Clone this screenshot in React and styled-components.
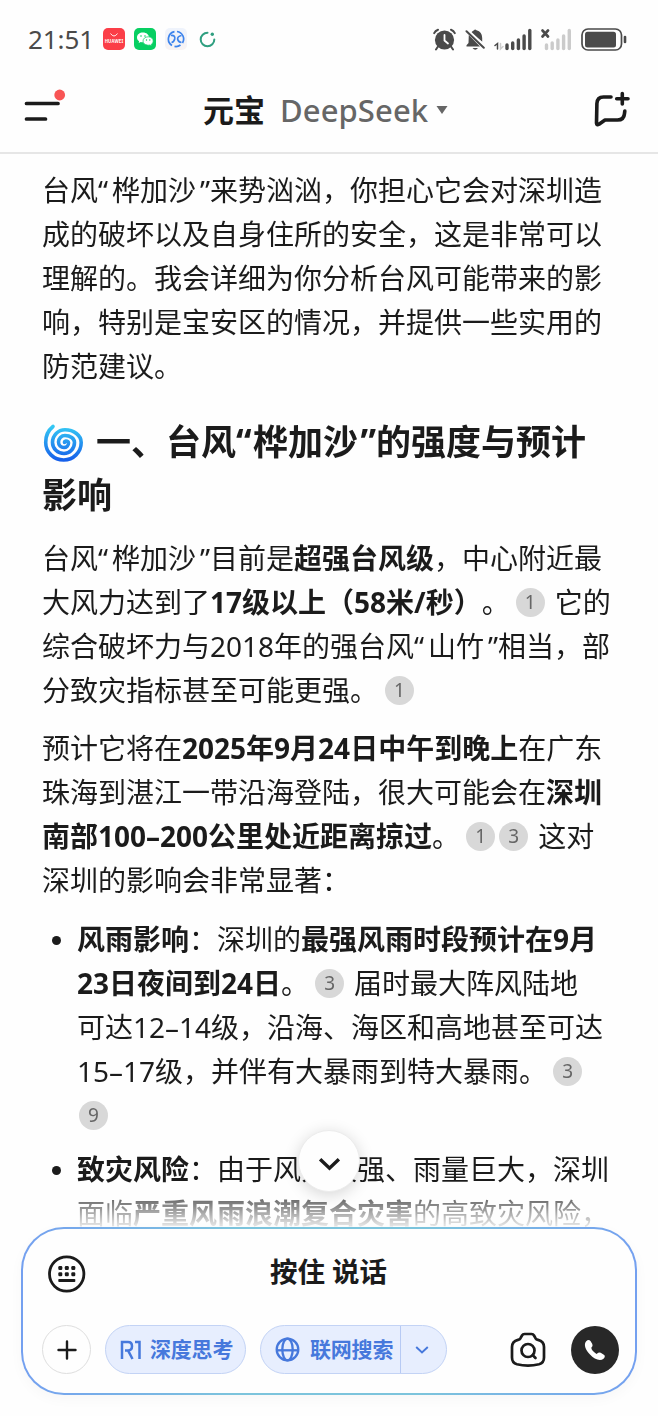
import React from 'react';
import styled, { createGlobalStyle } from 'styled-components';

const ink = '#1b1b1b';
const blue = '#4678dc';

const Global = createGlobalStyle`
  * { box-sizing: border-box; }
  body { margin: 0; background: #fefefe; }
  body, button { font-family: 'Noto Sans', 'Noto Sans CJK SC', sans-serif; color: ${ink}; }
  button { padding: 0; border: 0; background: none; }
  svg { display: block; flex: none; }
`;

const Screen = styled.div`
  width: 658px;
  height: 1416px;
  display: flex;
  flex-direction: column;
  overflow: hidden;
  background: #fefefe;
`;

const StatusBar = styled.div`
  height: 80px;
  padding: 0 31px 2px 28px;
  display: flex;
  align-items: center;
  justify-content: space-between;
`;

const StatusGroup = styled.div`
  display: flex;
  align-items: center;
  gap: ${(p) => p.$gap}px;
`;

const Clock = styled.span`
  font-size: 26px;
  line-height: 30px;
  letter-spacing: -0.1px;
  color: #4a4a4a;
  width: 66px;
  white-space: nowrap;
`;

const AppTile = styled.span`
  width: 22px;
  height: 22px;
  border-radius: 5px;
  display: flex;
  flex-direction: column;
  align-items: center;
  justify-content: center;
  background: ${(p) => p.$bg};
`;

const TileWord = styled.span`
  font-size: 4.3px;
  line-height: 7px;
  font-weight: 700;
  letter-spacing: 0.2px;
  color: #fff;
`;

const Header = styled.header`
  height: 74px;
  padding: 0 28px 12px 24px;
  display: flex;
  align-items: center;
  justify-content: space-between;
  border-bottom: 2px solid #e6e6e6;
`;

const MenuButton = styled.button`
  margin-bottom: 14px;
`;

const TitleButton = styled.button`
  display: flex;
  align-items: center;
  font-size: 31px;
  line-height: 40px;
  margin: 0 9px 0 0;
`;

const NewChatButton = styled.button`
  margin-bottom: 3px;
`;

const Brand = styled.span`
  font-weight: 700;
  width: 77px;
  text-align: left;
`;

const Model = styled.span`
  font-weight: 500;
  color: #666;
  width: 156px;
  text-align: left;
  letter-spacing: 0.1px;
`;

const Chat = styled.main`
  height: 1073px;
  flex: none;
  padding: 14px 0 0 42px;
  overflow: hidden;
  mask-image: linear-gradient(to bottom, #000 1028px, rgba(0, 0, 0, 0.12) 1071px);
`;

const Paragraph = styled.div`
  margin-bottom: ${(p) => p.$after ?? 14}px;
`;

const Line = styled.div`
  height: 44px;
  display: flex;
  align-items: center;
  white-space: pre;
  font-size: 28px;
  line-height: 44px;
`;

const Heading = styled.h2`
  margin: 27px 0 15px;
  font-size: 35px;
  line-height: 53px;
  font-weight: 700;
  white-space: pre;
`;

const HeadingLine = styled.div`
  height: 53px;
  display: flex;
  align-items: center;
`;

const Quote = styled.span`
  display: inline-block;
  width: ${(p) => p.$w || 14}px;
  text-align: ${(p) => (p.$close ? 'right' : 'left')};
`;

const Strong = styled.strong`
  font-weight: 700;
`;

const Cite = styled.span`
  width: 29px;
  height: 29px;
  margin: 0 ${(p) => p.$after ?? 10}px 0 ${(p) => p.$before ?? 6}px;
  border-radius: 50%;
  background: #d8d8d8;
  color: #666;
  font-size: 19px;
  line-height: 28px;
  text-align: center;
`;

const List = styled.ul`
  margin: 0;
  padding: 1px 0 0;
  list-style: none;
`;

const Item = styled.li`
  display: flex;
  margin-bottom: 10px;
`;

const Bullet = styled.span`
  width: 9px;
  height: 9px;
  margin: 19px 16px 0 10px;
  border-radius: 50%;
  background: ${ink};
`;

const ComposerArea = styled.footer`
  position: relative;
  padding: 0 22px;
`;

const ScrollDown = styled.button`
  position: absolute;
  left: 298px;
  top: -97px;
  width: 62px;
  height: 62px;
  padding-top: 5px;
  border-radius: 50%;
  background: #fefefe;
  border: 1px solid #ececec;
  box-shadow: 0 3px 16px rgba(0, 0, 0, 0.16);
  display: flex;
  align-items: center;
  justify-content: center;
`;

const Composer = styled.div`
  height: 168px;
  margin-left: -1px;
  width: 616px;
  border: 2px solid transparent;
  border-radius: 43px;
  background:
    linear-gradient(#fefefe, #fefefe) padding-box,
    linear-gradient(90deg, #74a0f0, #7cc4dc 35%, #7cc4dc 65%, #74a0f0) border-box;
  box-shadow: 0 4px 14px rgba(0, 0, 0, 0.03);
  padding: 24px 16px 19px 19px;
  display: flex;
  flex-direction: column;
  justify-content: space-between;
`;

const VoiceRow = styled.div`
  height: 42px;
  display: grid;
  grid-template-columns: 60px 1fr 60px;
  align-items: center;
  padding-left: 6px;
`;

const HoldToTalk = styled.button`
  font-size: 27.500px;
  line-height: 38px;
  font-weight: 700;
  margin: -5px 10px 0 0;
`;

const ToolRow = styled.div`
  height: 49px;
  display: flex;
  align-items: center;
`;

const RoundButton = styled.button`
  width: ${(p) => p.$size}px;
  height: ${(p) => p.$size}px;
  border-radius: 50%;
  border: ${(p) => (p.$dark ? '0' : '1px solid #dedede')};
  background: ${(p) => (p.$dark ? '#282828' : 'transparent')};
  display: flex;
  align-items: center;
  justify-content: center;
`;

const Pill = styled.div`
  height: 49px;
  width: ${(p) => p.$w}px;
  margin-left: 14px;
  border: 1px solid #c3d3f5;
  border-radius: 25px;
  background: #e7eefe;
  color: ${blue};
  display: flex;
  align-items: center;
  padding-left: 14px;
  font-size: 21px;
  line-height: 30px;
  font-weight: 700;
  white-space: nowrap;
`;

const PillLabel = styled.span`
  margin: -2px 0 0 ${(p) => p.$left || 0}px;
  letter-spacing: -0.2px;
`;

const PillMore = styled.span`
  height: 47px;
  margin-left: auto;
  width: 46px;
  padding-right: 3px;
  border-left: 1px solid #b7caf4;
  display: flex;
  align-items: center;
  justify-content: center;
`;

const CallTools = styled.div`
  margin-left: auto;
  display: flex;
  align-items: center;
  gap: 25px;
`;

function MenuIcon() {
  return (
    <svg width="42" height="36" viewBox="0 0 42 36">
      <path d="M2.500 18.500H34M2.500 34H21.500" stroke={ink} strokeWidth="3.700" strokeLinecap="round" />
      <circle cx="35.700" cy="10" r="5.400" fill="#f85555" />
    </svg>
  );
}

function NewChatIcon() {
  return (
    <svg width="36" height="36" viewBox="0 0 36 36" fill="none" stroke={ink} strokeWidth="3.600" strokeLinecap="round" strokeLinejoin="round">
      <path d="M17 6H9.500Q3.200 6 2.900 12.500L2.500 32Q2.700 34.500 5 33.200L11 29H23.500Q30 29 30.500 22.500L30.800 20" />
      <path d="M28.300 2.500V13M22.700 7.700H34" />
    </svg>
  );
}

function WeChatMark() {
  return (
    <svg width="18" height="16" viewBox="0 0 18 16">
      <path d="M7 1.500C3.500 1.500 1 3.600 1 6.400c0 1.600.8 2.900 2.100 3.800L2.700 12l2.100-1.100c.7.200 1.400.3 2.200.3 3.500 0 6-2.100 6-4.800s-2.500-4.900-6-4.900Z" fill="#fff" />
      <path d="M12.200 5.800c-3 0-5.200 1.900-5.200 4.200 0 2.400 2.200 4.200 5.200 4.200.6 0 1.200-.1 1.700-.2l1.800.9-.4-1.500c1.200-.8 1.900-2 1.900-3.400 0-2.300-2.100-4.200-5-4.200Z" fill="#fff" stroke="#07cf62" strokeWidth=".7" />
      <g fill="#07cf62"><circle cx="5" cy="5" r=".8" /><circle cx="9" cy="5" r=".8" /><circle cx="10.500" cy="9" r=".7" /><circle cx="13.800" cy="9" r=".7" /></g>
    </svg>
  );
}

function AlarmIcon() {
  return (
    <svg width="23" height="23" viewBox="0 0 23 23" fill="none" stroke="#4a4a4a" strokeWidth="2" strokeLinecap="round">
      <circle cx="11.500" cy="12" r="9.600" fill="#4a4a4a" stroke="none" />
      <path d="M1.200 5.200Q2.300 2.700 5 1.700M21.800 5.200Q20.700 2.700 18 1.700M5 18.500L3 21.500M18 18.500L20 21.500" />
      <path d="M11.500 7V12.500L15 15.500" stroke="#fff" strokeWidth="1.800" />
    </svg>
  );
}

function MutedBellIcon() {
  return (
    <svg width="20" height="23" viewBox="0 0 20 23">
      <path d="M6 4.500Q7.500 3 9 2.300Q10 .6 11.500 2.300Q17.200 4 17.200 10V13.800ZM3.800 7L15 18.500H1.500V17.300L3.500 15ZM7.500 20H13Q10.300 23.500 7.500 20Z" fill="#4a4a4a" />
      <path d="M3.300 2L20 17.800" stroke="#fefefe" strokeWidth="1.500" />
      <path d="M1.500 3.200L18.800 19.800" stroke="#4a4a4a" strokeWidth="2" strokeLinecap="round" />
    </svg>
  );
}

function SignalIcon({ off }) {
  const heights = [6.500, 8.500, 11.500, 15.500, 21];
  const start = off ? 5.500 : 13;
  return (
    <svg width={off ? 31 : 38} height="23" viewBox={off ? '0 0 31 23' : '0 0 38 23'} strokeLinecap="round" fill="none">
      {heights.map((h, i) => (
        <path key={h} d={`M${start + i * 5.700} ${23.500 - h}V20.500`} stroke={off ? '#cbcbcb' : '#4a4a4a'} strokeWidth="3.400" />
      ))}
      {off ? (
        <path d="M1.500 2.500L7 8.500M7 2.500L1.500 8.500" stroke="#4a4a4a" strokeWidth="2.600" />
      ) : (
        <g><path d="M1 17.500L3.500 15.500V21" stroke="#4a4a4a" strokeWidth="1.500" /><path d="M6.500 15.500V21L9 18.500" stroke="#ccc" strokeWidth="1.500" /></g>
      )}
    </svg>
  );
}

function BatteryIcon() {
  return (
    <svg width="46" height="23" viewBox="0 0 46 23">
      <rect x="1" y="1" width="39.500" height="21" rx="6" fill="none" stroke="#4a4a4a" strokeWidth="1.700" />
      <rect x="4" y="3.700" width="31" height="15.800" rx="2.500" fill="#4a4a4a" />
      <path d="M44 9V14" stroke="#4a4a4a" strokeWidth="2.600" strokeLinecap="round" />
    </svg>
  );
}

function SwirlIcon() {
  return (
    <svg width="54" height="42" viewBox="0 0 54 42" fill="none">
      <defs>
        <linearGradient id="swirl" x1="0" y1="0" x2="0" y2="1">
          <stop offset="0" stopColor="#34c8f4" />
          <stop offset="1" stopColor="#1660ea" />
        </linearGradient>
      </defs>
      <path
        d="M11 5.500A20 20 0 0 0 3.700 21.500A18 17.500 0 0 0 21.700 39A17.500 17.500 0 0 0 39.200 21.500A16.200 12.700 0 0 0 23 8.800A12.500 12.700 0 0 0 10.500 21.500A11.500 11 0 0 0 22 32.500A10.500 11 0 0 0 32.500 21.500A9.500 7 0 0 0 23 14.500A6.500 6.500 0 0 0 16.500 21A5.500 5.500 0 0 0 22 26.500A4.500 4.500 0 0 0 26.500 22Q26.300 20 24 20Q22.500 20.300 22.500 21.500"
        stroke="url(#swirl)" strokeWidth="3.600" strokeLinecap="round"
      />
    </svg>
  );
}

function Chevron({ w, h, color, weight }) {
  return (
    <svg width={w} height={h} viewBox="0 0 24 14" fill="none">
      <path d="M3 3L12 11.500L21 3" stroke={color} strokeWidth={weight} />
    </svg>
  );
}

function KeyboardIcon() {
  const cols = [12.500, 19, 25.500];
  return (
    <svg width="38" height="38" viewBox="0 0 38 38">
      <circle cx="18.700" cy="19" r="17.200" fill="none" stroke={ink} strokeWidth="2.800" />
      {cols.map((x) => (
        <g key={x} fill={ink}>
          <rect x={x - 2.200} y="11" width="4" height="4" rx="1.200" />
          <rect x={x - 2.200} y="17.300" width="4" height="4" rx="1.200" />
        </g>
      ))}
      <rect x="10.300" y="24" width="17" height="3" rx=".8" fill={ink} />
    </svg>
  );
}

function DeepThinkMark() {
  return (
    <svg width="22" height="20" viewBox="0 0 22 20" fill="none" stroke={blue} strokeWidth="2.500">
      <path d="M2 19V2H8Q12 2 12 6.200T8 10.400H5M8 10.400L12.500 19M15 2H19.500V19" />
    </svg>
  );
}

function GlobeIcon() {
  return (
    <svg width="26" height="26" viewBox="0 0 26 26" fill="none" stroke={blue} strokeWidth="2.300">
      <circle cx="12.500" cy="12.500" r="10.800" />
      <ellipse cx="12.500" cy="12.500" rx="5.200" ry="10.800" />
      <path d="M2 13.300H23" />
    </svg>
  );
}

function CameraSearchIcon() {
  return (
    <svg width="36" height="36" viewBox="0 0 36 36" fill="none" stroke={ink} strokeWidth="2.700" strokeLinejoin="round" strokeLinecap="round">
      <path d="M12 3.500Q12.800 2 14.500 2H21.500Q23.200 2 24 3.500L25.500 6.200Q26.300 7.500 28 7.900Q34 9.500 34 15V25.500Q34 31 29 32.300Q18 34.800 7 32.300Q2 31 2 25.500V15Q2 9.500 8 7.900Q9.700 7.500 10.500 6.200Z" />
      <circle cx="18" cy="18.500" r="6.500" />
      <path d="M22.800 23.300L25.500 26" />
    </svg>
  );
}

function PhoneIcon() {
  return (
    <svg width="24" height="24" viewBox="0 0 24 24">
      <path d="M3 3.500Q5.500 .8 7.500 3L9.300 6Q10.300 8 8.300 9.700Q8.500 12.500 13.500 16Q16.500 13.700 18.500 15.200L21.200 17Q22.700 18.500 20.500 20.700C17 23.500 11 21 7 16.500C2.500 12 .5 6.500 3 3.500Z" fill="#fff" />
    </svg>
  );
}

export default function App() {
  return (
    <Screen>
      <Global />
      <StatusBar>
        <StatusGroup $gap={9}>
          <Clock>21:51</Clock>
          <AppTile $bg="#fb3e48">
            <svg width="10" height="5" viewBox="0 0 10 5" fill="none"><path d="M1.500 .5Q5 5.500 8.500 .5" stroke="#fff" strokeWidth=".9" /></svg>
            <TileWord>HUAWEI</TileWord>
          </AppTile>
          <AppTile $bg="#07cf62"><WeChatMark /></AppTile>
          <AppTile $bg="linear-gradient(#eef3fc, #f8f3f3)">
            <svg width="18" height="18" viewBox="0 0 18 18" fill="none" stroke="#3c83ec" strokeWidth="1.700">
              <path d="M7.500 1.600A7.600 7.600 0 0 0 5 15.500M7.500 16.400A7.600 7.600 0 0 0 13.500 15M10 1.500A7.600 7.600 0 0 1 15.500 13" />
              <path d="M4 5.500Q8.500 5 7.700 9Q7 12 4.500 12.500M14.500 5.500Q10 6.500 10.700 9.500Q11.300 12 14.500 12.500" />
            </svg>
          </AppTile>
          <AppTile $bg="transparent">
            <svg width="17" height="17" viewBox="0 0 17 17" fill="none">
              <path d="M8.500 1.700A6.800 6.800 0 1 0 15.300 8.500" stroke="#2f9f80" strokeWidth="2" strokeLinecap="round" />
              <circle cx="13.300" cy="3.300" r="1.700" fill="#2f9f80" />
            </svg>
          </AppTile>
        </StatusGroup>
        <StatusGroup $gap={9}>
          <AlarmIcon />
          <MutedBellIcon />
          <SignalIcon />
          <SignalIcon off />
          <BatteryIcon />
        </StatusGroup>
      </StatusBar>

      <Header>
        <MenuButton><MenuIcon /></MenuButton>
        <TitleButton>
          <Brand>元宝</Brand>
          <Model>DeepSeek</Model>
          <svg width="12" height="8" viewBox="0 0 12 8"><path d="M.5 0H11.500L6 8Z" fill="#666" /></svg>
        </TitleButton>
        <NewChatButton><NewChatIcon /></NewChatButton>
      </Header>

      <Chat>
        <Paragraph $after={0}>
          <Line>台风<Quote>“</Quote>桦加沙<Quote $close>”</Quote>来势汹汹，你担心它会对深圳造</Line>
          <Line>成的破坏以及自身住所的安全，这是非常可以</Line>
          <Line>理解的。我会详细为你分析台风可能带来的影</Line>
          <Line>响，特别是宝安区的情况，并提供一些实用的</Line>
          <Line>防范建议。</Line>
        </Paragraph>

        <Heading>
          <HeadingLine><SwirlIcon />一、台风<Quote $w={17}>“</Quote>桦加沙<Quote $w={18} $close>”</Quote>的强度与预计</HeadingLine>
          <HeadingLine>影响</HeadingLine>
        </Heading>

        <Paragraph>
          <Line>台风<Quote>“</Quote>桦加沙<Quote $close>”</Quote>目前是<Strong>超强台风级</Strong>，中心附近最</Line>
          <Line>大风力达到了<Strong>17级以上（58米/秒）</Strong>。<Cite>1</Cite>它的</Line>
          <Line>综合破坏力与2018年的强台风<Quote>“</Quote>山竹<Quote $close>”</Quote>相当，部</Line>
          <Line>分致灾指标甚至可能更强。<Cite $before={7}>1</Cite></Line>
        </Paragraph>

        <Paragraph>
          <Line>预计它将在<Strong>2025年9月24日中午到晚上</Strong>在广东</Line>
          <Line>珠海到湛江一带沿海登陆，很大可能会在<Strong>深圳</Strong></Line>
          <Line><Strong>南部100–200公里处近距离掠过</Strong>。<Cite $after={4}>1</Cite><Cite $before={0}>3</Cite>这对</Line>
          <Line>深圳的影响会非常显著：</Line>
        </Paragraph>

        <List>
          <Item>
            <Bullet />
            <div>
              <Line><Strong>风雨影响</Strong>：深圳的<Strong>最强风雨时段预计在9月</Strong></Line>
              <Line><Strong>23日夜间到24日</Strong>。<Cite>3</Cite>届时最大阵风陆地</Line>
              <Line>可达12–14级，沿海、海区和高地甚至可达</Line>
              <Line>15–17级，并伴有大暴雨到特大暴雨。<Cite>3</Cite></Line>
              <Line><Cite $before={2}>9</Cite></Line>
            </div>
          </Item>
          <Item>
            <Bullet />
            <div>
              <Line><Strong>致灾风险</Strong>：由于风力极强、雨量巨大，深圳</Line>
              <Line>面临<Strong>严重风雨浪潮复合灾害</Strong>的高致灾风险，</Line>
            </div>
          </Item>
        </List>
      </Chat>

      <ComposerArea>
        <ScrollDown><Chevron w={25} h={15} color={ink} weight={3.3} /></ScrollDown>
        <Composer>
          <VoiceRow>
            <KeyboardIcon />
            <HoldToTalk>按住 说话</HoldToTalk>
          </VoiceRow>
          <ToolRow>
            <RoundButton $size={49}>
              <svg width="20" height="20" viewBox="0 0 20 20"><path d="M10 1.500V18.500M1.500 10H18.500" stroke={ink} strokeWidth="2.400" strokeLinecap="round" /></svg>
            </RoundButton>
            <Pill $w={141}>
              <DeepThinkMark />
              <PillLabel $left={8}>深度思考</PillLabel>
            </Pill>
            <Pill $w={187}>
              <GlobeIcon />
              <PillLabel $left={9}>联网搜索</PillLabel>
              <PillMore><Chevron w={16} h={9} color={blue} weight={3} /></PillMore>
            </Pill>
            <CallTools>
              <CameraSearchIcon />
              <RoundButton $size={48} $dark><PhoneIcon /></RoundButton>
            </CallTools>
          </ToolRow>
        </Composer>
      </ComposerArea>
    </Screen>
  );
}
